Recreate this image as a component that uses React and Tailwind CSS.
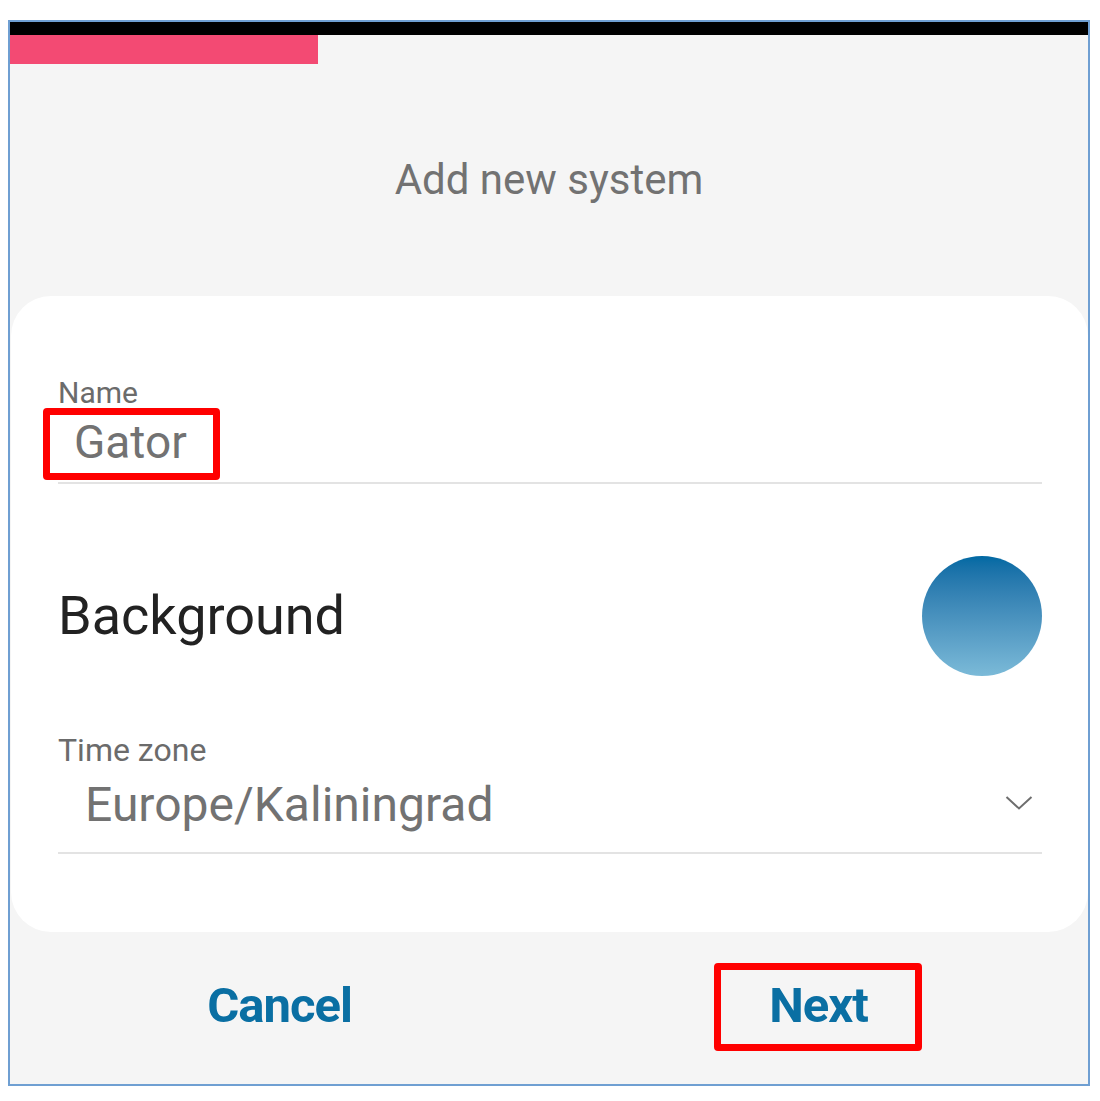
export default function App() {
  return (
    <div className="w-[1100px] h-[1101px] bg-white pt-[20px] pl-[8px]" style={{ fontFamily: 'Roboto, "Noto Sans", sans-serif' }}>
      <div className="w-[1082px] h-[1066px] border-2 border-[#6f9fd2] bg-[#f5f5f5] flex flex-col">
        <div className="h-[13px] bg-black" />
        <div className="h-[29px] w-[308px] bg-[#f34a73]" />

        <h1 className="mt-[92px] text-center text-[42px] leading-[48px] text-[#727272]">Add new system</h1>

        <div className="mt-[92px] ml-[1px] bg-white rounded-[40px] h-[636px] pl-[47px] pr-[46px] pt-[80px]">
          <div className="text-[30px] leading-[34px] text-[#6b6b6b]">Name</div>
          <div className="relative border-b-2 border-[#e3e3e3] pt-[5px] pb-[13px]">
            <span className="pl-[16px] text-[46px] leading-[54px] text-[#727272]">Gator</span>
            <div className="absolute left-[-15px] top-[-2px] w-[177px] h-[72px] border-[7px] border-[#ff0000] rounded-[4px]" />
          </div>

          <div className="flex items-center justify-between mt-[72px]">
            <span className="text-[54px] leading-[62px] text-[#222]">Background</span>
            <div className="w-[120px] h-[120px] rounded-full bg-gradient-to-b from-[#0069a3] to-[#7bbad8]" />
          </div>

          <div className="mt-[56px] text-[32px] leading-[36px] text-[#6b6b6b]">Time zone</div>
          <div className="flex items-center justify-between border-b-2 border-[#e3e3e3] pt-[9px] pb-[19px]">
            <span className="pl-[27px] text-[48px] leading-[56px] text-[#727272]">Europe/Kaliningrad</span>
            <svg width="28" height="16" viewBox="0 0 28 16" className="mr-[9px] mb-[4px]">
              <path d="M1.5 2 L14 13.5 L26.5 2" fill="none" stroke="#6e6e6e" strokeWidth="2" />
            </svg>
          </div>
        </div>

        <div className="flex flex-1 items-center pb-[4px]">
          <div className="flex-1 flex justify-center">
            <span className="text-[49px] leading-[56px] font-bold text-[#0a6fa3] tracking-[-1px]">Cancel</span>
          </div>
          <div className="flex-1 flex justify-center">
            <span className="relative text-[49px] leading-[56px] font-bold text-[#0a6fa3] tracking-[-1px]">
              Next
              <span className="absolute left-[-55px] top-[-15px] w-[208px] h-[88px] border-[7px] border-[#ff0000] rounded-[4px]" />
            </span>
          </div>
        </div>
      </div>
    </div>
  );
}
